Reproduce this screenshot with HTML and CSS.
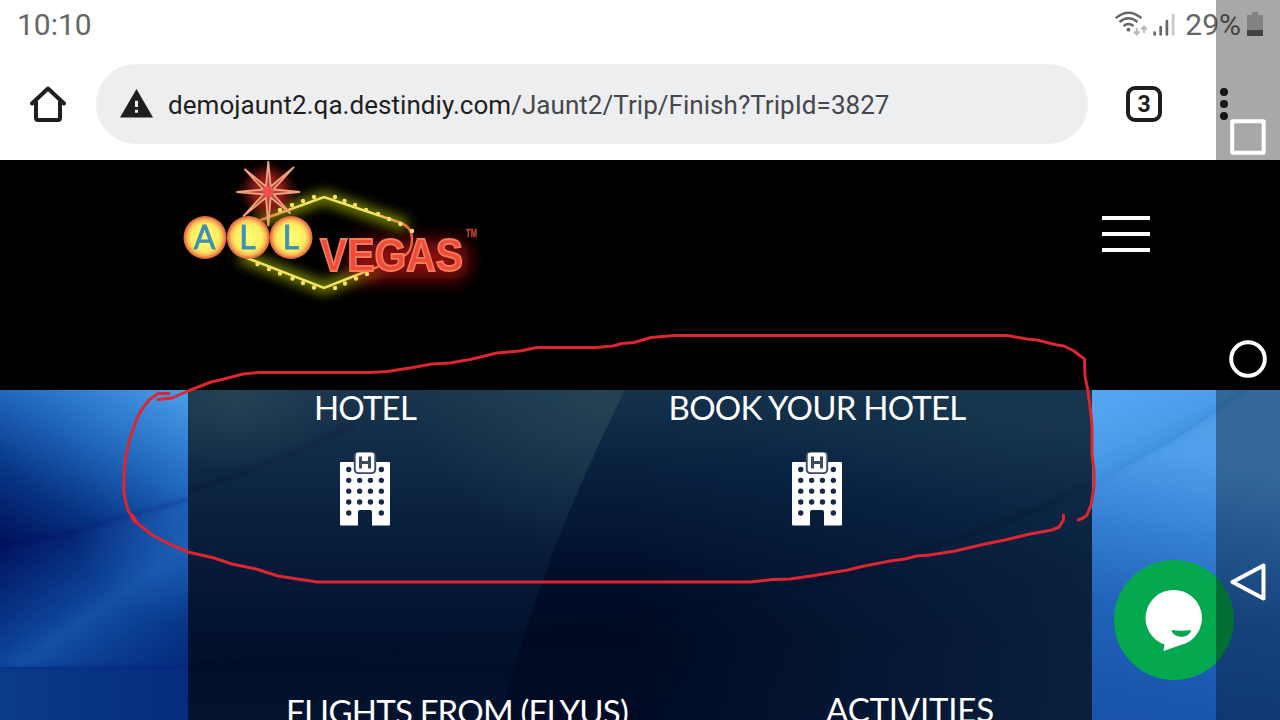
FILE: index.html
```html
<!DOCTYPE html>
<html lang="en">
<head>
<meta charset="utf-8">
<title>All Vegas</title>
<link rel="stylesheet" href="styles.css">
</head>
<body>
<div class="status">
  <span class="clock">10:10</span>
  <div class="indicators">
    <svg class="wifi" width="34" height="28" viewBox="0 0 34 28" fill="none">
      <g stroke="#666" stroke-width="2.3"><path d="M.7 8.200Q13.500-2.800 26.500 8.200"/><path d="M4.500 12Q13.500 4.500 22.500 12"/><path d="M8.500 16Q13.500 12 18.500 16"/></g>
      <circle cx="13.500" cy="19.700" r="1.900" fill="#666"/>
      <g stroke="#bbb" stroke-width="2"><path d="M21.800 18v6.500M19 21.500l2.800 3 2.800-3M29 23v-6.500M26.200 19.500l2.800-3 2.800 3"/></g>
    </svg>
    <svg class="signal" width="22" height="24" viewBox="0 0 22 24" stroke-width="2.700" stroke-linecap="round"><path d="M1.700 19.500v2" stroke="#666"/><path d="M7.700 14v7.500" stroke="#666"/><path d="M13.900 8v13.500" stroke="#666"/><path d="M20.100 2v19.500" stroke="#c8c8c8"/></svg>
    <span class="percent">29%</span>
    <svg class="battery" width="16" height="24" viewBox="0 0 16 24"><path d="M5 0h6v3h5v15H0V3h5z" fill="#c6c6c6"/><path d="M0 18h16v6H0z" fill="#666"/></svg>
  </div>
</div>
<div class="toolbar">
  <svg class="home" width="36" height="36" viewBox="0 0 36 36" fill="none" stroke="#1f1f1f" stroke-width="4" stroke-linecap="round"><path d="M2 17.500 18 2.500l16 15" stroke-linejoin="round"/><path d="M6 16v16q0 2 2 2h20q2 0 2-2V16"/></svg>
  <div class="address">
    <svg width="34" height="30" viewBox="0 0 34 30"><path d="M16.500 0 33 28.500H0z" fill="#1f1f1f"/><path d="M15 11.800h3v6.200h-3zM15 20.800h3v3h-3z" fill="#edeef0"/></svg>
    <span class="url">demojaunt2.qa.destindiy.com<i>/Jaunt2/Trip/Finish?TripId=3827</i></span>
  </div>
  <span class="tabs">3</span>
  <svg class="kebab" width="8" height="32" viewBox="0 0 8 32"><circle cx="4" cy="4" r="4"/><circle cx="4" cy="16" r="4"/><circle cx="4" cy="28" r="4"/></svg>
</div>
<header class="site-header">
  <svg class="logo" width="340" height="150" viewBox="170 160 340 150">
    <defs>
      <filter id="glow" x="-40%" y="-60%" width="180%" height="220%"><feGaussianBlur stdDeviation="6"/></filter>
      <filter id="wide" x="-40%" y="-80%" width="180%" height="260%"><feGaussianBlur stdDeviation="9"/></filter>
      <filter id="soft"><feGaussianBlur stdDeviation=".4"/></filter>
      <radialGradient id="bulb"><stop offset="0" stop-color="#ffff78"/><stop offset=".65" stop-color="#fdec60"/><stop offset=".83" stop-color="#f9b552"/><stop offset=".93" stop-color="#ec7547"/><stop offset="1" stop-color="#d76b38"/></radialGradient>
      <linearGradient id="tube" x1="253" x2="412" y1="0" y2="0" gradientUnits="userSpaceOnUse"><stop offset="0" stop-color="#df6238"/><stop offset=".3" stop-color="#f4e35b"/><stop offset=".75" stop-color="#f4e35b"/><stop offset="1" stop-color="#e96035"/></linearGradient>
      <linearGradient id="tube2" x1="247" x2="380" y1="0" y2="0" gradientUnits="userSpaceOnUse"><stop offset="0" stop-color="#f4e35b"/><stop offset=".8" stop-color="#f4e35b"/><stop offset="1" stop-color="#e96035"/></linearGradient>
    </defs>
    <path d="M258 221 324 197l83 29M240 256l84 32 56-21" fill="none" stroke="#8d9a00" stroke-opacity=".85" stroke-width="12" filter="url(#glow)"/>
    <circle cx="268" cy="191" r="21" fill="#9a1a12" filter="url(#glow)"/>
    <rect x="350" y="241" width="118" height="38" rx="12" fill="#8c0a07" filter="url(#wide)"/>
    <g filter="url(#soft)">
      <path d="M258 221 324 197 400 222.500Q412 227 412 239Q412 252 404 256" fill="none" stroke="url(#tube)" stroke-width="2.500"/>
      <path d="M247 258 324 288 380 266" fill="none" stroke="url(#tube2)" stroke-width="2.500"/>
      <g fill="#f5e16a"><circle cx="280" cy="210" r="2.200"/><circle cx="292" cy="205" r="2.200"/><circle cx="303" cy="201" r="2.200"/><circle cx="314" cy="197" r="2.200"/><circle cx="335" cy="197" r="2.200"/><circle cx="344.500" cy="201" r="2.200"/><circle cx="355" cy="205" r="2.200"/><circle cx="366" cy="210" r="2.200"/><circle cx="378" cy="214" r="2.200"/><circle cx="389" cy="219" r="2.200"/><circle cx="400.500" cy="224" r="2.200"/><circle cx="412" cy="231" r="2.200"/><circle cx="257.500" cy="264" r="2.200"/><circle cx="269" cy="269" r="2.200"/><circle cx="280" cy="273.500" r="2.200"/><circle cx="292.500" cy="278.500" r="2.200"/><circle cx="303" cy="283" r="2.200"/><circle cx="314" cy="287.500" r="2.200"/><circle cx="335" cy="288" r="2.200"/><circle cx="345" cy="283.500" r="2.200"/><circle cx="356" cy="278.500" r="2.200"/><circle cx="367" cy="274" r="2.200"/></g>
      <path d="M268.300 161 270.700 186.500 294 167 273.500 189.500 300 192 273.500 194.300 290.500 213.500 270.600 197.500 268.300 226 266 197.500 243 216.500 263.200 194.300 236.500 192 263.200 189.500 244.500 169 266 186.500z" fill="#b04a3c" stroke="#f2a17b" stroke-width="1.800"/>
      <circle cx="268.300" cy="191.500" r="5.500" fill="#f14b50"/>
      <circle cx="205" cy="237.500" r="21.500" fill="url(#bulb)"/><circle cx="248.300" cy="237.500" r="21.500" fill="url(#bulb)"/><circle cx="291" cy="237.500" r="21.500" fill="url(#bulb)"/>
      <g class="bulb-letters"><text x="204.500" y="249">A</text><text x="247.500" y="249">L</text><text x="291" y="249">L</text></g>
      <text class="vegas" x="320" y="270.500" textLength="143" lengthAdjust="spacingAndGlyphs">VEGAS</text>
      <text class="tm" x="466" y="236.500" textLength="11" lengthAdjust="spacingAndGlyphs">TM</text>
    </g>
  </svg>
  <div class="burger"><b></b><b></b><b></b></div>
</header>
<main class="trip">
  <svg class="backdrop" width="1280" height="330" viewBox="0 390 1280 330">
    <defs>
      <linearGradient id="l1" gradientUnits="userSpaceOnUse" x1="0" y1="545" x2="108" y2="346"><stop offset="0" stop-color="#001058"/><stop offset=".3" stop-color="#083585"/><stop offset=".6" stop-color="#2067bc"/><stop offset="1" stop-color="#4b9feb"/></linearGradient>
      <linearGradient id="l2" gradientUnits="userSpaceOnUse" x1="10" y1="540" x2="130" y2="710"><stop offset="0" stop-color="#001460"/><stop offset=".4" stop-color="#0c3f93"/><stop offset=".52" stop-color="#134fa3"/><stop offset=".75" stop-color="#093a8d"/><stop offset="1" stop-color="#052a7b"/></linearGradient>
      <linearGradient id="l3"><stop offset="0" stop-color="#0b3b8b"/><stop offset="1" stop-color="#052c7f"/></linearGradient>
      <radialGradient id="l4" gradientUnits="userSpaceOnUse" cx="188" cy="505" r="120"><stop offset="0" stop-color="#2a78d0" stop-opacity=".6"/><stop offset="1" stop-color="#2a78d0" stop-opacity="0"/></radialGradient>
      <linearGradient id="r1" gradientUnits="userSpaceOnUse" x1="1140" y1="385" x2="1170" y2="450"><stop offset="0" stop-color="#54a6f0"/><stop offset=".6" stop-color="#4b9de8"/><stop offset="1" stop-color="#4190dc"/></linearGradient>
      <linearGradient id="r2" gradientUnits="userSpaceOnUse" x1="1216" y1="420" x2="1160" y2="720"><stop offset="0" stop-color="#509fe9"/><stop offset=".13" stop-color="#4f9fea"/><stop offset=".4" stop-color="#347fd3"/><stop offset=".65" stop-color="#2163ba"/><stop offset="1" stop-color="#1754aa"/></linearGradient>
      <linearGradient id="p1" x1="0" y1="0" x2="0" y2="1"><stop offset="0" stop-color="#19354d"/><stop offset=".3" stop-color="#0c2542"/><stop offset=".62" stop-color="#041633"/><stop offset=".85" stop-color="#010f2a"/><stop offset="1" stop-color="#03132e"/></linearGradient>
      <linearGradient id="p2" x1="0" y1="0" x2="0" y2="1"><stop offset="0" stop-color="#16324b"/><stop offset=".25" stop-color="#08203e"/><stop offset=".55" stop-color="#010f2b"/><stop offset=".75" stop-color="#000a22"/><stop offset="1" stop-color="#010b25"/></linearGradient>
      <radialGradient id="p3"><stop offset="0" stop-color="#284856" stop-opacity=".7"/><stop offset="1" stop-color="#284856" stop-opacity="0"/></radialGradient>
      <linearGradient id="p4" gradientUnits="userSpaceOnUse" x1="640" y1="0" x2="1092" y2="0"><stop offset="0" stop-color="#0b2f50" stop-opacity="0"/><stop offset=".5" stop-color="#0b2b4d" stop-opacity=".35"/><stop offset="1" stop-color="#102f4c" stop-opacity=".6"/></linearGradient>
      <filter id="haze"><feGaussianBlur stdDeviation="2"/></filter>
      <clipPath id="panel"><path d="M188 390h904v330H188z"/></clipPath>
    </defs>
    <path d="M0 390h188v330H0z" fill="url(#l1)"/>
    <path d="M0 547Q100 526 188 499V672H0z" fill="url(#l2)"/>
    <path d="M0 547Q100 526 188 499V672H0z" fill="url(#l4)"/>
    <path d="M0 667h188v53H0z" fill="url(#l3)"/>
    <g filter="url(#haze)" fill="none" stroke="#001c6a" stroke-opacity=".25" stroke-width="3"><path d="M0 547Q100 526 188 499M0 667h188"/></g>
    <path d="M1092 390h188v330h-188z" fill="url(#r1)"/>
    <path d="M1092 483Q1190 436 1245 390h35v330h-188z" fill="url(#r2)"/>
    <path d="M1092 483Q1190 436 1245 390" fill="none" stroke="#2d77c4" stroke-opacity=".3" stroke-width="3" filter="url(#haze)"/>
    <g clip-path="url(#panel)">
      <path d="M188 390h904v330H188z" fill="url(#p1)"/>
      <ellipse cx="235" cy="395" rx="115" ry="80" fill="url(#p3)"/>
      <ellipse cx="600" cy="400" rx="190" ry="150" fill="url(#p3)"/>
      <path d="M625 390h467v330H499Q540 560 625 390z" fill="url(#p2)"/>
      <path d="M625 390h467v330H499Q540 560 625 390z" fill="url(#p4)"/>
      <ellipse cx="1040" cy="415" rx="310" ry="100" fill="url(#p3)" opacity=".5"/>
      <g filter="url(#haze)" fill="none" stroke="#000a24" stroke-opacity=".2" stroke-width="4"><path d="M188 492Q280 460 355 425M188 665Q400 660 640 617Q930 565 1092 483"/></g>
    </g>
  </svg>
  <section class="services">
    <div class="service upper"><h2>HOTEL</h2>
      <svg width="50" height="74" viewBox="0 0 50 74"><use href="#hotel"/></svg></div>
    <div class="service upper"><h2>BOOK YOUR HOTEL</h2>
      <svg width="50" height="74" viewBox="0 0 50 74">
        <g id="hotel"><path d="M1 10h48q1 0 1 1v61q0 1.500-1 1.500H32V60q0-2-2-2H20q-2 0-2 2v13.500H1q-1 0-1-1.500V11q0-1 1-1z" fill="#fff"/>
        <path d="M8.700 17.500h.1M41.300 17.500h.1M8.700 28.300h.1M19.600 28.300h.1M30.400 28.300h.1M41.300 28.300h.1M8.700 39.200h.1M19.600 39.200h.1M30.400 39.200h.1M41.300 39.200h.1M8.700 50h.1M19.600 50h.1M30.400 50h.1M41.300 50h.1M8.700 61h.1M41.300 61h.1" stroke="#172b48" stroke-width="5.300" stroke-linecap="round"/>
        <rect x="13.800" y="-1" width="22.400" height="23" rx="4.500" fill="#3a4b63"/><rect x="15.700" y=".6" width="18.600" height="19.600" rx="3" fill="#fff"/>
        <path d="M20.500 4.500v12M29.500 4.500v12M20.500 10.500h9" stroke="#3a4b63" stroke-width="3"/></g>
      </svg></div>
    <div class="service lower"><h2>FLIGHTS FROM (FLYUS)</h2></div>
    <div class="service lower activities"><h2>ACTIVITIES</h2></div>
  </section>
</main>
<div class="chat">
  <svg width="58" height="62" viewBox="0 0 58 62"><path d="M29 0a28 28 0 0 1 12 53.300Q30 57 18.500 61l1-6.500A28 28 0 0 1 29 0z" fill="#fff"/><path d="M26.500 40q9.500 1.500 19.500 0c-1 9-18 9-19.500 0z" fill="#04a84e"/></svg>
</div>
<nav class="system-nav">
  <svg width="36" height="36" viewBox="0 0 36 36"><rect x="2.200" y="2.200" width="31.500" height="31.500" rx=".5"/></svg>
  <svg width="38" height="38" viewBox="0 0 38 38"><circle cx="19" cy="19" r="16.800"/></svg>
  <svg width="38" height="38" viewBox="0 0 38 38"><path d="M34.500 2.500v33L3.500 19z" stroke-linejoin="round"/></svg>
</nav>
<svg class="marker" width="1280" height="720" viewBox="0 0 1280 720">
  <path d="M169 393.500H158L149 400Q142 408 137 418L130 438Q124 462 124 475V492Q126 506 129 512L136 522L152 535Q170 545 188 552L214 558L232 564L256 569L278 576L317 582H750L772 579.500L790 579L811 576L848 570L862 566.500L890 561L905 559L917 556L930 555L955 551L985 544L1005 540L1030 534L1052 530L1059 527L1063.500 520V515"/>
  <path d="M158 399.500L172 398L188 391L211 382L224 379L243 374L258 372.500H370L387 371.500L410 368L432 364L450 363L470 359.500L497 353L520 351L537 347.500H597L613 346L622 343.500L634 342.500L651 337.500L675 335.500H1007L1027 339L1037 340L1057 345L1064 346L1074 351L1079 355L1084.500 359L1085 376L1088 391L1091 415L1092 427V455L1094 470V487L1091 505L1087 515L1083 518L1078 520"/>
  <path d="M132 516l4 6" stroke-width="4.500"/>
</svg>
</body>
</html>
```
FILE: styles.css
```css
* { box-sizing: border-box; }
body { margin: 0; width: 1280px; height: 720px; overflow: hidden; position: relative; display: flex; flex-direction: column; background: #fff; font-family: Roboto, sans-serif; }
svg { display: block; flex: none; }
.status { height: 48px; flex: none; display: flex; justify-content: space-between; padding: 0 17px 0 17px; color: #666; font-size: 30px; line-height: 49px; }
.indicators { display: flex; align-items: flex-start; }
.wifi { margin: 10px 4px 0 0; }
.signal { margin: 13px 10px 0 0; }
.percent { margin-right: 6px; }
.battery { margin-top: 12px; }
.toolbar { height: 112px; flex: none; display: flex; align-items: center; padding: 0 52px 0 30px; }
.address { width: 992px; height: 80px; margin: 0 38px 0 30px; border-radius: 40px; background: #edeef0; display: flex; align-items: center; gap: 14px; padding-left: 24px; }
.url { font-size: 26px; color: #1f1f1f; white-space: nowrap; line-height: 34px; padding-top: 1px; letter-spacing: .045px; }
.url i { font-style: normal; color: #46474a; }
.tabs { width: 36px; height: 36px; border: 4px solid #1f1f1f; border-radius: 9px; color: #1f1f1f; font-size: 23px; font-weight: 700; line-height: 29px; text-align: center; }
.kebab { margin-left: 58px; fill: #1f1f1f; }
.site-header { height: 230px; flex: none; background: #000; display: flex; justify-content: space-between; align-items: flex-start; padding: 0 130px 0 170px; }
.burger { display: grid; gap: 12px; margin-top: 56px; width: 48px; }
.burger b { height: 4px; background: #fff; }
.bulb-letters { font: 400 32px Lato, sans-serif; fill: #3e91b4; stroke: #3e91b4; stroke-width: .8px; text-anchor: middle; }
.vegas { font: 700 46px "Liberation Sans", sans-serif; fill: #f2493a; stroke: #ee7f58; stroke-width: 1.8px; }
.tm { font: 700 10px "Liberation Sans", sans-serif; fill: #c0442f; stroke: #c0442f; stroke-width: .4px; }
.trip { height: 330px; flex: none; position: relative; padding: 0 188px; overflow: hidden; }
.backdrop { position: absolute; left: 0; top: 0; }
.services { position: relative; display: grid; grid-template-columns: 452px 452px; grid-template-rows: 302px 60px; }
.service { display: flex; flex-direction: column; align-items: center; }
.upper { padding-right: 98px; }
.upper h2 { line-height: 34px; }
.upper svg { margin-top: 28px; }
.lower { padding-left: 86px; }
.activities { margin-top: -2px; padding-left: 88px; }
h2 { margin: 0; color: #fff; font: 400 33px/38px Lato, sans-serif; letter-spacing: -.77px; white-space: nowrap; }
.activities h2 { letter-spacing: -.2px; }
.chat { position: absolute; left: 1114px; top: 560px; width: 120px; height: 120px; border-radius: 50%; background: #04a84e; display: flex; justify-content: center; padding: 30px 0 0 0; }
.system-nav { position: absolute; right: 0; top: 0; width: 64px; height: 720px; background: rgba(0, 0, 0, .34); display: flex; flex-direction: column; align-items: center; justify-content: space-between; padding: 119px 0; fill: none; stroke: #fff; stroke-width: 4; }
.marker { position: absolute; left: 0; top: 0; pointer-events: none; fill: none; stroke: #dc2630; stroke-width: 3; stroke-linecap: round; stroke-linejoin: round; }
```
